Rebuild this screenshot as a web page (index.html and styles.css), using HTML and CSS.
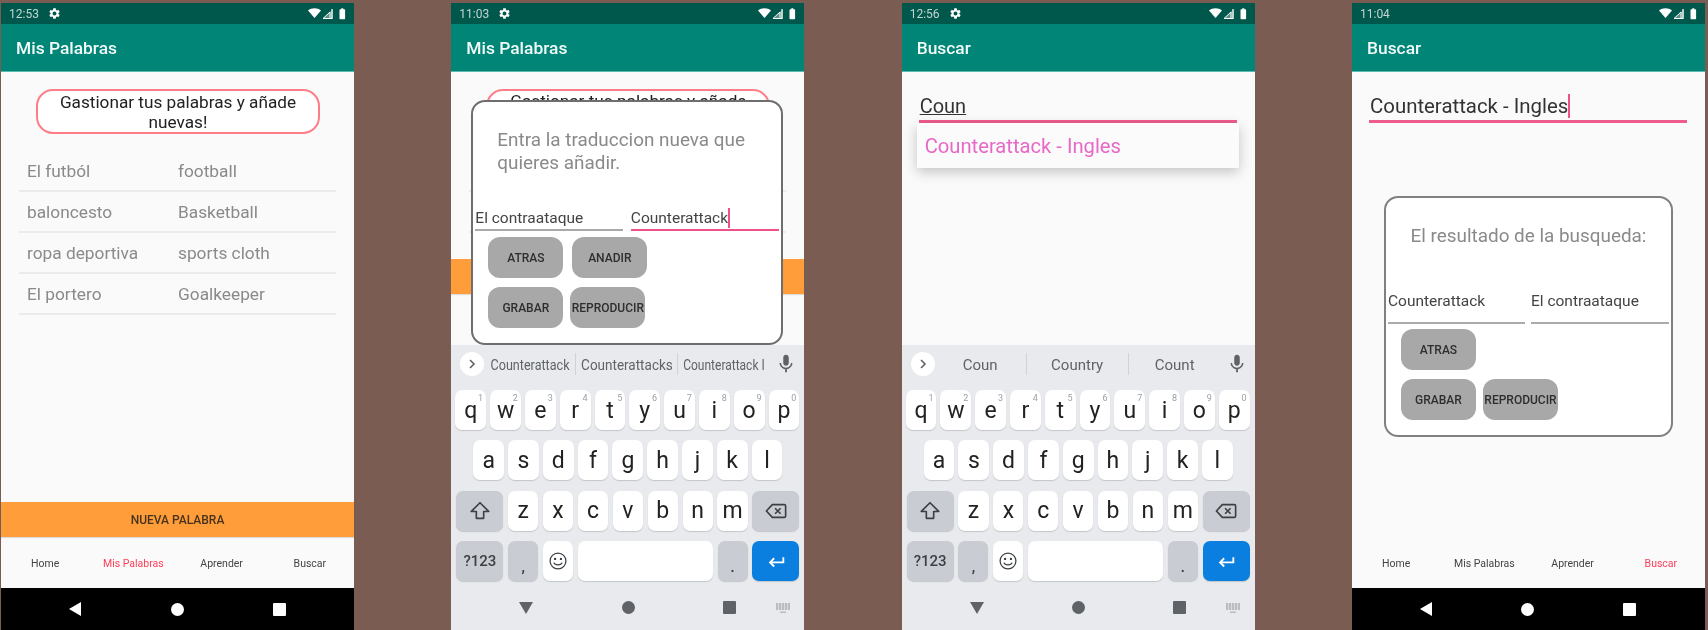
FILE: index.html
```html
<!DOCTYPE html>
<html lang="es">
<head>
<meta charset="utf-8">
<title>Mis Palabras</title>
<link rel="stylesheet" href="styles.css">
</head>
<body>
<svg class="defs" aria-hidden="true">
  <symbol id="gear" viewBox="0 0 24 24"><path d="M19.14 12.94c.04-.3.06-.61.06-.94 0-.32-.02-.64-.07-.94l2.03-1.58a.49.49 0 0 0 .12-.61l-1.92-3.32a.488.488 0 0 0-.59-.22l-2.39.96c-.5-.38-1.03-.7-1.62-.94l-.36-2.54a.484.484 0 0 0-.48-.41h-3.84c-.24 0-.43.17-.47.41l-.36 2.54c-.59.24-1.13.57-1.62.94l-2.39-.96c-.22-.08-.47 0-.59.22L2.74 8.87c-.12.21-.08.47.12.61l2.03 1.58c-.05.3-.09.63-.09.94s.02.64.07.94l-2.03 1.58a.49.49 0 0 0-.12.61l1.92 3.32c.12.22.37.29.59.22l2.39-.96c.5.38 1.03.7 1.62.94l.36 2.54c.05.24.24.41.48.41h3.84c.24 0 .44-.17.47-.41l.36-2.54c.59-.24 1.13-.56 1.62-.94l2.39.96c.22.08.47 0 .59-.22l1.92-3.32c.12-.22.07-.47-.12-.61l-2.01-1.58zM12 15.6c-1.98 0-3.6-1.62-3.6-3.6s1.62-3.6 3.6-3.6 3.6 1.62 3.6 3.6-1.62 3.6-3.6 3.6z"/></symbol>
  <symbol id="sysicons" viewBox="0 0 38 12">
    <path d="M0 2.6C3.4-.5 9.6-.5 13 2.6L6.5 10z" fill="#fff"/>
    <path d="M15 10.5 25 1v9.5z" fill="#fff" opacity=".35"/>
    <path d="M15 10.5 22 4v6.5z" fill="none" stroke="#fff" stroke-width="1"/>
    <path d="M24 1v9.5h-7" fill="none" stroke="#fff" stroke-width="1.2"/>
    <path d="M31.5 2c0-.5.3-.8.8-.8h1V.2h2v1h1c.5 0 .8.3.8.8v8.5c0 .5-.3.8-.8.8h-4c-.5 0-.8-.3-.8-.8z" fill="#fff"/>
  </symbol>
  <symbol id="mic" viewBox="0 0 24 24"><path d="M12 14c1.66 0 3-1.34 3-3V5c0-1.66-1.34-3-3-3S9 3.34 9 5v6c0 1.66 1.34 3 3 3zm5.3-3c0 3-2.54 5.1-5.3 5.1S6.7 14 6.7 11H5c0 3.41 2.72 6.23 6 6.72V21h2v-3.28c3.28-.48 6-3.3 6-6.72h-1.700z"/></symbol>
  <symbol id="shift" viewBox="0 0 24 24"><path d="M12 3 2.500 12.500H8V20h8v-7.500h5.500z" fill="none" stroke="#3c4043" stroke-width="1.800" stroke-linejoin="round"/></symbol>
  <symbol id="backspace" viewBox="0 0 24 24"><path d="M8 5h13a1.500 1.500 0 0 1 1.500 1.500v11A1.500 1.500 0 0 1 21 19H8l-6.500-7z" fill="none" stroke="#3c4043" stroke-width="1.800" stroke-linejoin="round"/><path d="m11 9 6 6m0-6-6 6" stroke="#3c4043" stroke-width="1.800"/></symbol>
  <symbol id="enter" viewBox="0 0 24 24"><path d="M20 8v5.500H5.500M10 9l-4.500 4.500L10 18" fill="none" stroke="#fff" stroke-width="2"/></symbol>
  <symbol id="emoji" viewBox="0 0 24 24"><circle cx="12" cy="12" r="9.500" fill="none" stroke="#3c4043" stroke-width="1.500"/><circle cx="8.500" cy="9.500" r="1.400" fill="#3c4043"/><circle cx="15.500" cy="9.500" r="1.400" fill="#3c4043"/><path d="M7 14c1.200 3.400 8.800 3.400 10 0" fill="none" stroke="#3c4043" stroke-width="1.500"/></symbol>
  <symbol id="chevron" viewBox="0 0 24 24"><path d="m9 6 6 6-6 6" fill="none" stroke="#5f6368" stroke-width="2.400"/></symbol>
  <symbol id="kbd" viewBox="0 0 16 12"><path d="M1 1h14v7H1zM5 9.500h6V11H5z" fill="#b9bcc1"/><path d="M3.500 1v7M6.500 1v7M9.500 1v7M12.500 1v7" stroke="#e8eaed" stroke-width=".7"/></symbol>
</svg>

<main class="screens">

  <section class="phone">
    <div class="status"><span class="time">12:53</span><svg class="gear"><use href="#gear"/></svg><svg class="sys"><use href="#sysicons"/></svg></div>
    <header class="appbar">Mis Palabras</header>
    <div class="content">
      <p class="banner">Gastionar tus palabras y añade nuevas!</p>
      <ul class="words">
        <li class="word"><span class="word-a">El futból</span><span>football</span></li>
        <li class="word"><span class="word-a">baloncesto</span><span>Basketball</span></li>
        <li class="word"><span class="word-a">ropa deportiva</span><span>sports cloth</span></li>
        <li class="word"><span class="word-a">El portero</span><span>Goalkeeper</span></li>
      </ul>
      <div class="newword">NUEVA PALABRA</div>
      <nav class="tabs"><span>Home</span><span class="tab-on">Mis Palabras</span><span>Aprender</span><span>Buscar</span></nav>
    </div>
    <div class="sysnav"><i class="tri-left"></i><i class="dot"></i><i class="sq"></i></div>
  </section>

  <section class="phone">
    <div class="status"><span class="time">11:03</span><svg class="gear"><use href="#gear"/></svg><svg class="sys"><use href="#sysicons"/></svg></div>
    <header class="appbar">Mis Palabras</header>
    <div class="content">
      <p class="banner banner-under">Gastionar tus palabras y añade</p>
      <ul class="words">
        <li class="word"></li>
        <li class="word"></li>
        <li class="word"></li>
      </ul>
      <div class="newword"></div>
      <nav class="tabs"></nav>
      <div class="dialog dialog-add">
        <p class="dialog-msg">Entra la traduccion nueva que quieres añadir.</p>
        <div class="fields">
          <div class="field field-a">El contraataque</div>
          <div class="field field-b field-on"><span class="caret">Counterattack</span></div>
        </div>
        <div class="btns btns-first btns-wide"><span class="btn">ATRAS</span><span class="btn">ANADIR</span></div>
        <div class="btns"><span class="btn">GRABAR</span><span class="btn">REPRODUCIR</span></div>
      </div>
    </div>
    <div class="keyboard">
      <div class="suggest">
        <span class="more"><svg class="more-ic"><use href="#chevron"/></svg></span>
        <span class="sg sg1"><b class="sq1">Counterattack</b></span>
        <span class="sg sg2"><b class="sq2">Counterattacks</b></span>
        <span class="sg sg3"><b class="sq3">Counterattack I</b></span>
        <svg class="mic"><use href="#mic"/></svg>
      </div>
      <div class="keys">
        <div class="krow">
          <span class="key">q<sup>1</sup></span><span class="key">w<sup>2</sup></span><span class="key">e<sup>3</sup></span><span class="key">r<sup>4</sup></span><span class="key">t<sup>5</sup></span><span class="key">y<sup>6</sup></span><span class="key">u<sup>7</sup></span><span class="key">i<sup>8</sup></span><span class="key">o<sup>9</sup></span><span class="key">p<sup>0</sup></span>
        </div>
        <div class="krow krow-in">
          <span class="key">a</span><span class="key">s</span><span class="key">d</span><span class="key">f</span><span class="key">g</span><span class="key">h</span><span class="key">j</span><span class="key">k</span><span class="key">l</span>
        </div>
        <div class="krow krow-wide">
          <span class="key key-fn key-side"><svg class="kic"><use href="#shift"/></svg></span><span class="key">z</span><span class="key">x</span><span class="key">c</span><span class="key">v</span><span class="key">b</span><span class="key">n</span><span class="key">m</span><span class="key key-fn key-side"><svg class="kic"><use href="#backspace"/></svg></span>
        </div>
        <div class="krow krow-wide">
          <span class="key key-fn key-side key-num">?123</span><span class="key key-fn key-punct">,</span><span class="key"><svg class="kic kic-s"><use href="#emoji"/></svg></span><span class="key key-space"></span><span class="key key-fn key-punct">.</span><span class="key key-enter key-side"><svg class="kic"><use href="#enter"/></svg></span>
        </div>
      </div>
      <div class="kbnav"><i class="tri-down"></i><i class="dot dot-g"></i><i class="sq sq-g"></i><svg class="kbd"><use href="#kbd"/></svg></div>
    </div>
  </section>

  <section class="phone">
    <div class="status"><span class="time">12:56</span><svg class="gear"><use href="#gear"/></svg><svg class="sys"><use href="#sysicons"/></svg></div>
    <header class="appbar">Buscar</header>
    <div class="content">
      <div class="search"><u class="composing">Coun</u></div>
      <div class="dropdown">Counterattack - Ingles</div>
    </div>
    <div class="keyboard">
      <div class="suggest">
        <span class="more"><svg class="more-ic"><use href="#chevron"/></svg></span>
        <span class="sg sg1">Coun</span>
        <span class="sg sg2">Country</span>
        <span class="sg sg3">Count</span>
        <svg class="mic"><use href="#mic"/></svg>
      </div>
      <div class="keys">
        <div class="krow">
          <span class="key">q<sup>1</sup></span><span class="key">w<sup>2</sup></span><span class="key">e<sup>3</sup></span><span class="key">r<sup>4</sup></span><span class="key">t<sup>5</sup></span><span class="key">y<sup>6</sup></span><span class="key">u<sup>7</sup></span><span class="key">i<sup>8</sup></span><span class="key">o<sup>9</sup></span><span class="key">p<sup>0</sup></span>
        </div>
        <div class="krow krow-in">
          <span class="key">a</span><span class="key">s</span><span class="key">d</span><span class="key">f</span><span class="key">g</span><span class="key">h</span><span class="key">j</span><span class="key">k</span><span class="key">l</span>
        </div>
        <div class="krow krow-wide">
          <span class="key key-fn key-side"><svg class="kic"><use href="#shift"/></svg></span><span class="key">z</span><span class="key">x</span><span class="key">c</span><span class="key">v</span><span class="key">b</span><span class="key">n</span><span class="key">m</span><span class="key key-fn key-side"><svg class="kic"><use href="#backspace"/></svg></span>
        </div>
        <div class="krow krow-wide">
          <span class="key key-fn key-side key-num">?123</span><span class="key key-fn key-punct">,</span><span class="key"><svg class="kic kic-s"><use href="#emoji"/></svg></span><span class="key key-space"></span><span class="key key-fn key-punct">.</span><span class="key key-enter key-side"><svg class="kic"><use href="#enter"/></svg></span>
        </div>
      </div>
      <div class="kbnav"><i class="tri-down"></i><i class="dot dot-g"></i><i class="sq sq-g"></i><svg class="kbd"><use href="#kbd"/></svg></div>
    </div>
  </section>

  <section class="phone">
    <div class="status"><span class="time">11:04</span><svg class="sys"><use href="#sysicons"/></svg></div>
    <header class="appbar">Buscar</header>
    <div class="content">
      <div class="search search-full"><span class="caret">Counterattack - Ingles</span></div>
      <nav class="tabs"><span>Home</span><span>Mis Palabras</span><span>Aprender</span><span class="tab-on">Buscar</span></nav>
      <div class="dialog dialog-result">
        <p class="dialog-msg dialog-msg-c">El resultado de la busqueda:</p>
        <div class="fields fields-tall">
          <div class="field field-a2">Counterattack</div>
          <div class="field field-b2">El contraataque</div>
        </div>
        <div class="btns btns-first"><span class="btn">ATRAS</span></div>
        <div class="btns"><span class="btn">GRABAR</span><span class="btn">REPRODUCIR</span></div>
      </div>
    </div>
    <div class="sysnav"><i class="tri-left"></i><i class="dot"></i><i class="sq"></i></div>
  </section>

</main>
</body>
</html>
```

FILE: styles.css
```css
* { box-sizing: border-box; }
html, body { margin: 0; height: 100%; }
body { background: #7a5c52; font-family: Roboto, "Liberation Sans", sans-serif; overflow: hidden; }
.defs { display: none; }

.screens { display: flex; justify-content: space-between; height: 630px; padding: 3px 3px 0 1px; }
.phone { width: 353px; display: flex; flex-direction: column; background: #fafafa; filter: blur(.4px); }

.status { height: 21px; flex: none; background: #00574b; display: flex; align-items: center; padding: 0 8px; color: #c3d6d2; font-size: 12px; }
.time { width: 38px; }
.gear { width: 13px; height: 13px; fill: #fff; margin-left: 1px; }
.sys { width: 38px; height: 12px; margin-left: auto; }

.appbar { height: 48px; flex: none; background: #008577; border-bottom: 1px solid #5fb8ae; color: #f2fbf9; font-size: 17.4px; font-weight: 500; padding: 12px 0 0 15px; line-height: 24px; }

.content { flex: 1; min-height: 0; display: flex; flex-direction: column; position: relative; overflow: hidden; }

.banner { flex: none; width: 284px; height: 45px; margin: 17px 0 0 35px; background: #fff; border: 2px solid #ff7d87; border-radius: 17px; color: #222; font-size: 17.2px; line-height: 20px; text-align: center; padding: 0 10px; display: flex; align-items: center; }
.banner-under { align-items: flex-start; justify-content: center; white-space: nowrap; }
.words { list-style: none; margin: 17px 18px 0; padding: 0; flex: 0 1 auto; min-height: 0; overflow: hidden; }
.word { height: 41px; border-bottom: 2px solid #ebebeb; display: flex; align-items: center; color: #8a8a8a; font-size: 17.3px; padding: 0 0 0 8px; }
.word-a { width: 151px; }

.newword { margin-top: auto; height: 35px; flex: none; background: #ff9d3a; color: #47331c; font-size: 12px; font-weight: 500; display: flex; align-items: center; justify-content: center; box-shadow: 0 1px 1px #ddd; }
.tabs { height: 51px; flex: none; display: grid; grid-template-columns: repeat(4, 1fr); align-items: center; justify-items: center; color: #444; font-size: 10.5px; padding-top: 1px; }
.search + .tabs { margin-top: auto; }
.tab-on { color: #ff3d57; }

.sysnav { height: 42px; flex: none; background: #000; display: grid; grid-template-columns: repeat(3, 102px); padding-left: 23px; align-items: center; justify-items: center; }
.tri-left { width: 0; height: 0; border-style: solid; border-width: 7px 12px 7px 0; border-color: transparent #fff transparent transparent; }
.dot { width: 13px; height: 13px; border-radius: 50%; background: #fff; }
.sq { width: 13px; height: 13px; border-radius: 1px; background: #fff; }

.dialog { position: absolute; background: #fff; border: 2px solid #6e6e6e; border-radius: 14px; }
.dialog-add { left: 20px; top: 28px; width: 312px; height: 245px; padding-top: 26px; }
.dialog-result { left: 32px; top: 124px; width: 289px; height: 241px; padding-top: 26px; border-color: #808080; }
.dialog-msg { margin: 0; padding: 0 26px 0 24px; color: #8a8a8a; font-size: 18.9px; line-height: 23px; }
.dialog-msg-c { padding: 0; text-align: center; }
.fields { display: flex; padding: 0 2px; margin-top: 34px; }
.fields-tall { margin-top: 44px; }
.field { border-bottom: 2px solid #aaa; color: #444; font-size: 15.5px; line-height: 20px; height: 23px; white-space: nowrap; }
.fields-tall .field { height: 33px; }
.field-a { width: 148px; }
.field-b { width: 149px; margin-left: 8px; }
.field-a2 { width: 137px; }
.field-b2 { width: 138px; margin-left: 6px; }
.field-on { border-bottom-color: #f0508a; }
.caret { border-right: 2px solid #f0508a; display: inline-block; }

.btns { display: flex; gap: 7px; padding-left: 15px; margin-top: 9px; }
.btns-first { margin-top: 5px; }
.btns-wide { gap: 9px; margin-top: 6px; }
.btn { width: 75px; height: 41px; border-radius: 12px; background: #a8a8a8; color: #2e2e2e; font-size: 12px; font-weight: 500; display: flex; align-items: center; justify-content: center; white-space: nowrap; }

.keyboard { height: 285px; flex: none; background: #e8eaed; display: flex; flex-direction: column; padding-top: 7px; }
.suggest { display: flex; align-items: center; height: 24px; flex: none; padding-left: 9px; color: #5f6368; font-size: 15px; }
.more { width: 24px; height: 24px; border-radius: 50%; background: #fff; display: flex; align-items: center; justify-content: center; flex: none; }
.more-ic { width: 16px; height: 16px; }
.sg { height: 22px; display: flex; align-items: center; justify-content: center; white-space: nowrap; padding-top: 2px; }
.sg b { font-weight: 400; display: inline-block; }
.sg1 { width: 91px; }
.sg2 { width: 103px; border-left: 1px solid #cfd2d6; border-right: 1px solid #cfd2d6; }
.sg3 { width: 92px; }
.sq1 { transform: scaleX(.84); }
.sq2 { transform: scaleX(.9); }
.sq3 { transform: scaleX(.8); }
.mic { width: 22px; height: 22px; fill: #5f6368; margin-left: 5px; flex: none; }

.keys { display: flex; flex-direction: column; gap: 10.3px; margin-top: 14px; flex: none; }
.krow { display: flex; gap: 4px; height: 40px; padding: 0 5px 0 4px; }
.krow-in { padding: 0 22px; }
.krow-wide { gap: 4.8px; padding: 0 5px; }
.key { flex: 1; min-width: 0; position: relative; background: #fff; border-radius: 7px; box-shadow: 0 1px 1px #c4c6ca; color: #222; font-size: 23px; display: flex; align-items: center; justify-content: center; }
.key sup { position: absolute; top: 3px; right: 3px; color: #9aa0a6; font-size: 9px; line-height: 10px; vertical-align: baseline; }
.key-fn { background: #c9cdd3; }
.key-side { flex: 0 0 47px; }
.key-space { flex: 0 0 135px; }
.key-num { font-size: 15px; font-weight: 500; color: #3c4043; }
.key-punct { font-size: 14px; font-weight: 700; align-items: flex-end; padding-bottom: 6px; color: #3c4043; }
.key-enter { background: #0a7fe0; }
.kic { width: 22px; height: 22px; }
.kic-s { width: 20px; height: 20px; }

.kbnav { flex: 1; display: grid; grid-template-columns: repeat(3, 102px) auto; padding: 5px 0 0 24px; align-items: center; justify-items: center; }
.tri-down { width: 0; height: 0; border-style: solid; border-width: 12px 7px 0; border-color: #5f6368 transparent transparent; }
.dot-g { background: #5f6368; }
.sq-g { background: #5f6368; margin-right: 2px; }
.kbd { width: 16px; height: 12px; margin-left: -20px; }

.search { flex: none; margin: 22px 18px 0 17px; height: 29px; border-bottom: 3px solid #ee5c8e; color: #333; font-size: 20px; line-height: 24px; padding-left: 1px; white-space: nowrap; }
.search-full { font-size: 20.4px; }
.composing { text-decoration-thickness: 1px; }
.dropdown { position: absolute; left: 15px; top: 51px; width: 322px; height: 45px; background: #fbfbfb; box-shadow: 0 4px 12px rgba(0,0,0,.22); color: #e868c8; font-size: 20.2px; line-height: 47px; padding-left: 8px; }
```
